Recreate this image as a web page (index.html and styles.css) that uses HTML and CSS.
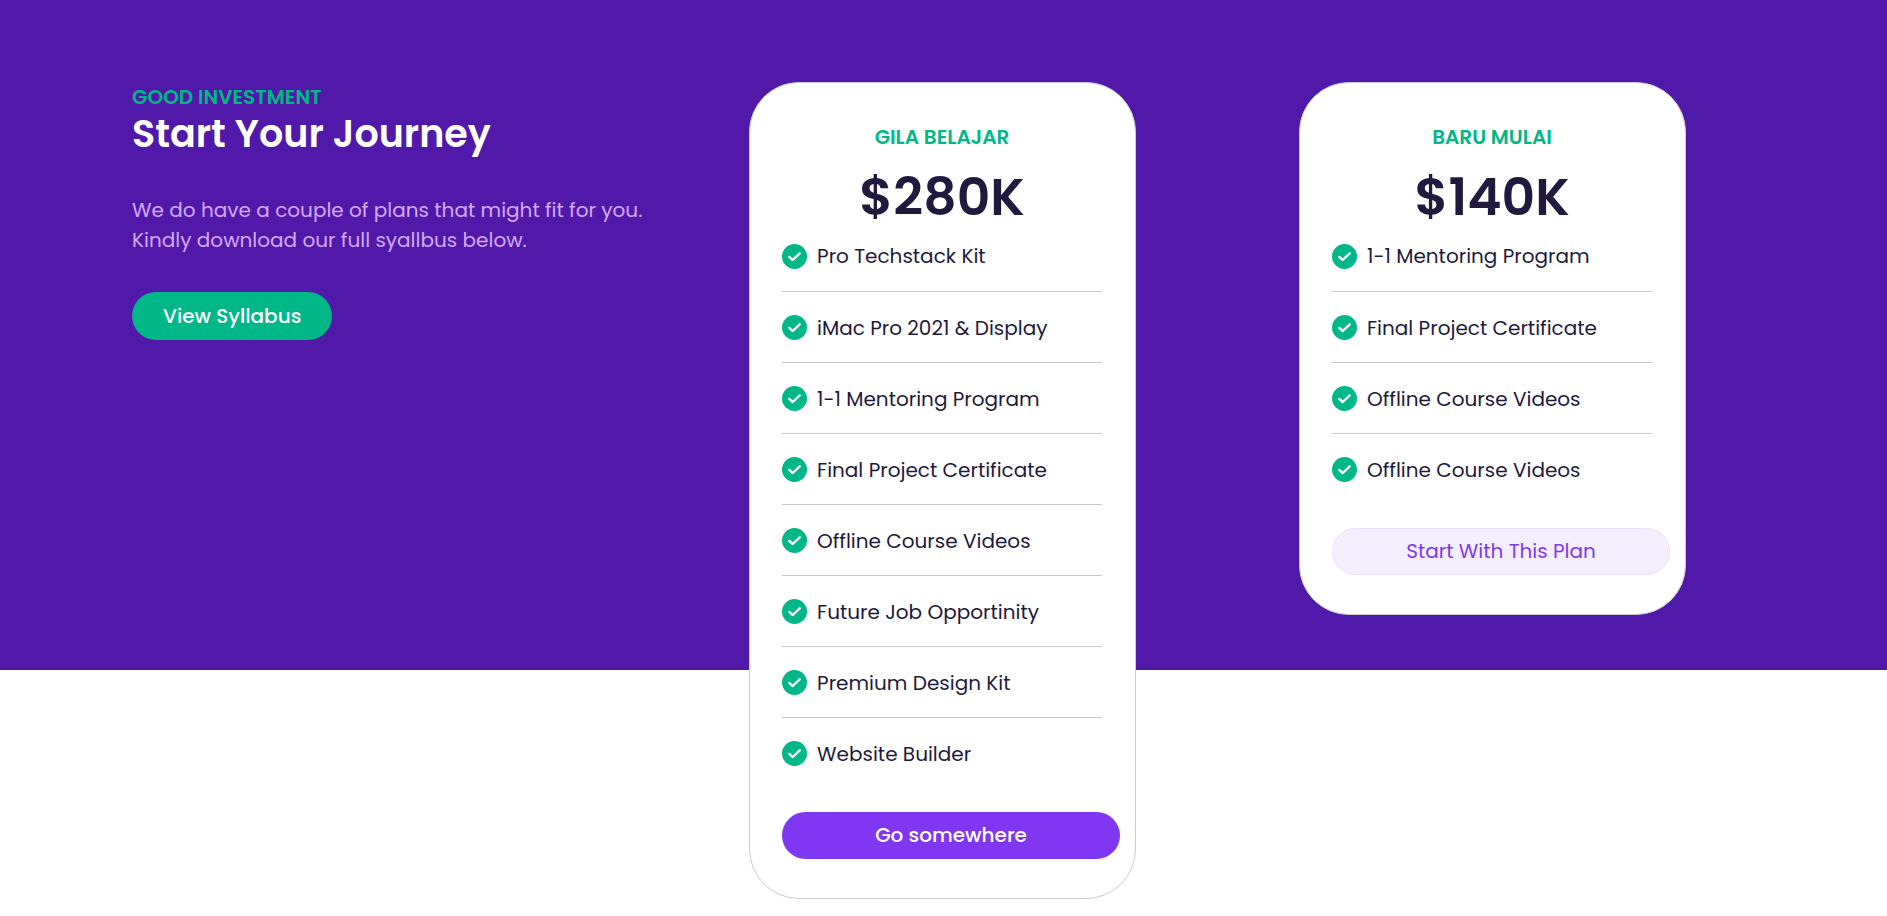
FILE: index.html
```html
<!DOCTYPE html>
<html lang="en">
<head>
<meta charset="utf-8">
<meta name="viewport" content="width=device-width, initial-scale=1">
<title>Start Your Journey</title>
<link rel="stylesheet" href="styles.css">
</head>
<body>
<svg class="sprite" aria-hidden="true">
  <symbol id="check" viewBox="0 0 25 25">
    <circle cx="12.5" cy="12.5" r="12.5" fill="#00b887"/>
    <path d="M7.3 12.9 L10.7 16 L17.7 9.3" fill="none" stroke="#fff" stroke-width="2.4" stroke-linecap="round" stroke-linejoin="round"/>
  </symbol>
</svg>
<main class="pricing">
  <section class="intro">
    <p class="eyebrow">GOOD INVESTMENT</p>
    <h1 class="title">Start Your Journey</h1>
    <p class="lead">We do have a couple of plans that might fit for you.<br>Kindly download our full syallbus below.</p>
    <a class="btn btn-green" href="#syllabus">View Syllabus</a>
  </section>

  <section class="plan">
    <h2 class="eyebrow">GILA BELAJAR</h2>
    <p class="price">$280K</p>
    <ul class="features">
      <li><svg class="check"><use href="#check"/></svg>Pro Techstack Kit</li>
      <li><svg class="check"><use href="#check"/></svg>iMac Pro 2021 &amp; Display</li>
      <li><svg class="check"><use href="#check"/></svg>1-1 Mentoring Program</li>
      <li><svg class="check"><use href="#check"/></svg>Final Project Certificate</li>
      <li><svg class="check"><use href="#check"/></svg>Offline Course Videos</li>
      <li><svg class="check"><use href="#check"/></svg>Future Job Opportinity</li>
      <li><svg class="check"><use href="#check"/></svg>Premium Design Kit</li>
      <li><svg class="check"><use href="#check"/></svg>Website Builder</li>
    </ul>
    <a class="btn btn-purple" href="#pro">Go somewhere</a>
  </section>

  <section class="plan">
    <h2 class="eyebrow">BARU MULAI</h2>
    <p class="price">$140K</p>
    <ul class="features">
      <li><svg class="check"><use href="#check"/></svg>1-1 Mentoring Program</li>
      <li><svg class="check"><use href="#check"/></svg>Final Project Certificate</li>
      <li><svg class="check"><use href="#check"/></svg>Offline Course Videos</li>
      <li><svg class="check"><use href="#check"/></svg>Offline Course Videos</li>
    </ul>
    <a class="btn btn-light" href="#starter">Start With This Plan</a>
  </section>
</main>
</body>
</html>
```
FILE: styles.css
```css
* { box-sizing: border-box; }

body {
  margin: 0;
  background: #fff;
  color: #1e1a3c;
  font-family: Poppins, Inter, "Open Sans", sans-serif;
  font-size: 20px;
  line-height: 30px;
}

h1, h2, p, ul { margin: 0; padding: 0; }

.sprite { display: none; }

.pricing {
  display: grid;
  grid-template-columns: 617fr 550fr 588fr;
  align-items: start;
  padding: 82px 0 17px 7%;
  background: linear-gradient(#5119a9, #5119a9) top / 100% 670px no-repeat;
}

.eyebrow {
  color: #00b887;
  font-size: 20px;
  font-weight: 600;
  line-height: 30px;
}

.intro .title {
  color: #fff;
  font-size: 38px;
  font-weight: 600;
  line-height: 44px;
}

.lead {
  margin: 39px 0 37px;
  color: #d4a9fb;
}

.btn {
  display: block;
  border: 1px solid transparent;
  border-radius: 24px;
  font-weight: 500;
  line-height: 45px;
  text-align: center;
  text-decoration: none;
}

.btn-green {
  display: inline-block;
  padding: 0 30px;
  background: #00b887;
  color: #fff;
  line-height: 46px;
}

.plan {
  width: 387px;
  padding: 39px 15px 39px 32px;
  border: 1px solid #ccc;
  border-radius: 50px;
  background: #fff;
}

.plan .eyebrow, .price, .features { margin-right: 18px; text-align: center; }

.price {
  color: #211a3e;
  font-size: 52px;
  font-weight: 600;
  line-height: 64px;
  margin-top: 13px;
}

.features {
  margin-top: 14px;
  list-style: none;
}

.features li {
  display: flex;
  align-items: center;
  gap: 10px;
  height: 71px;
  padding-bottom: 22px;
  border-bottom: 1px solid #c8c8c8;
}

.features li + li { padding-top: 23px; }
.features li:first-child { height: 49px; }
.features li:last-child { height: 48px; padding-bottom: 0; border: 0; }

.check { width: 25px; height: 25px; flex: none; }

.plan .btn { margin-top: 46px; }
.btn-purple { background: #7f37f2; color: #fff; }
.plan .btn-light { background: #f5eefe; border-color: #ebe0fd; color: #7f37f2; font-weight: 400; }
```
